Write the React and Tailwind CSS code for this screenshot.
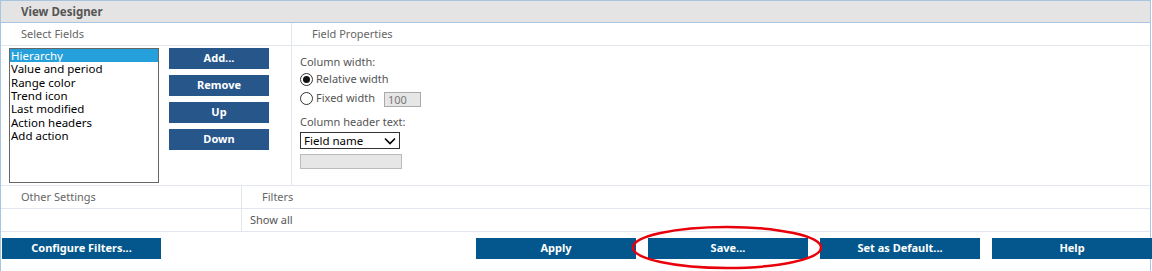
import React from 'react';

const fields = ['Hierarchy', 'Value and period', 'Range color', 'Trend icon', 'Last modified', 'Action headers', 'Add action'];
const sideButtons = ['Add...', 'Remove', 'Up', 'Down'];
const footerLeft = 'Configure Filters...';
const footerRight = ['Apply', 'Save...', 'Set as Default...', 'Help'];

const SectionTitle = ({ children, className = '' }) => (
  <div className={`h-[23px] flex items-center border-b border-[#e1e6ef] text-[#666] ${className}`}>{children}</div>
);

const App = () => {
  return (
    <div className="relative w-[1152px] h-[271px] bg-white font-['Noto_Sans',sans-serif] text-[11px] overflow-hidden">
      <div className="w-[1151px] h-[271px] border-l border-r border-t border-[#a7c5e0] flex flex-col">
        <div className="h-[22px] bg-[#e4e4e4] border-b border-[#a7c5e0] flex items-center pl-[20px] font-bold text-[11.5px] text-[#555]">
          View Designer
        </div>

        <div className="grid grid-cols-[291px_1fr] h-[163px] border-b border-[#e1e6ef]">
          <div className="border-r border-[#e1e6ef] flex flex-col">
            <SectionTitle className="pl-[20px]">Select Fields</SectionTitle>
            <div className="flex pl-[8px] pt-[2px] gap-[10px]">
              <div className="w-[150px] h-[135px] border border-[#666] text-black text-[11.5px]">
                {fields.map((f, i) => (
                  <div
                    key={f}
                    className={`h-[13.33px] leading-[13.33px] pl-[1px] ${i === 0 ? 'bg-[#26a0da] text-white' : ''}`}
                  >
                    {f}
                  </div>
                ))}
              </div>
              <div className="flex flex-col gap-[6px]">
                {sideButtons.map((b) => (
                  <button
                    key={b}
                    className="w-[100px] h-[21px] bg-[#27568a] text-white font-bold text-[11px] flex items-center justify-center"
                  >
                    {b}
                  </button>
                ))}
              </div>
            </div>
          </div>

          <div className="flex flex-col">
            <SectionTitle className="pl-[20px]">Field Properties</SectionTitle>
            <div className="pl-[8px] pt-[7px] text-[#555] flex flex-col">
              <div className="h-[17px] leading-[17px]">Column width:</div>
              <label className="flex items-center h-[18px] gap-[3px]">
                <span className="w-[13px] h-[13px] rounded-full border border-[#333] flex items-center justify-center bg-white">
                  <span className="w-[7px] h-[7px] rounded-full bg-[#111]" />
                </span>
                Relative width
              </label>
              <label className="flex items-center h-[21px] gap-[3px]">
                <span className="w-[13px] h-[13px] rounded-full border border-[#333] bg-white" />
                <span className="mr-[6px]">Fixed width</span>
                <span className="w-[37px] h-[15px] border border-[#aaa] bg-[#e6e6e6] text-[#777] leading-[13px] pl-[3px] mt-[2px]">100</span>
              </label>
              <div className="h-[16px] leading-[16px] mt-[5px]">Column header text:</div>
              <div className="w-[100px] h-[17px] border border-[#333] mt-[2px] flex items-center justify-between pl-[3px] pr-[3px] text-black text-[11.5px]">
                <span>Field name</span>
                <svg width="12" height="8" viewBox="0 0 12 8" fill="none" stroke="#000" strokeWidth="1.6">
                  <path d="M1 1.5 L6 6.5 L11 1.5" />
                </svg>
              </div>
              <div className="w-[102px] h-[15px] border border-[#bbb] bg-[#e6e6e6] mt-[5px]" />
            </div>
          </div>
        </div>

        <div className="grid grid-cols-[241px_1fr]">
          <SectionTitle className="pl-[20px] border-r">Other Settings</SectionTitle>
          <SectionTitle className="pl-[20px]">Filters</SectionTitle>
          <div className="h-[23px] border-b border-r border-[#e1e6ef]" />
          <div className="h-[23px] flex items-center border-b border-[#e1e6ef] pl-[8px] text-[#555]">Show all</div>
        </div>

        <div className="flex mt-[6px] pl-[1px] mr-[-2px]">
          <button className="w-[159px] h-[21px] bg-[#03578c] text-white font-bold text-[11px]">{footerLeft}</button>
          <div className="flex ml-auto gap-[12px]">
            {footerRight.map((b) => (
              <button key={b} className="w-[160px] h-[21px] bg-[#03578c] text-white font-bold text-[11px]">
                {b}
              </button>
            ))}
          </div>
        </div>
      </div>

      <svg className="absolute left-0 top-0 pointer-events-none" width="1152" height="271">
        <ellipse cx="727" cy="247.5" rx="94" ry="20.5" fill="none" stroke="#e8000b" strokeWidth="2.5" />
      </svg>
    </div>
  );
};

export default App;
